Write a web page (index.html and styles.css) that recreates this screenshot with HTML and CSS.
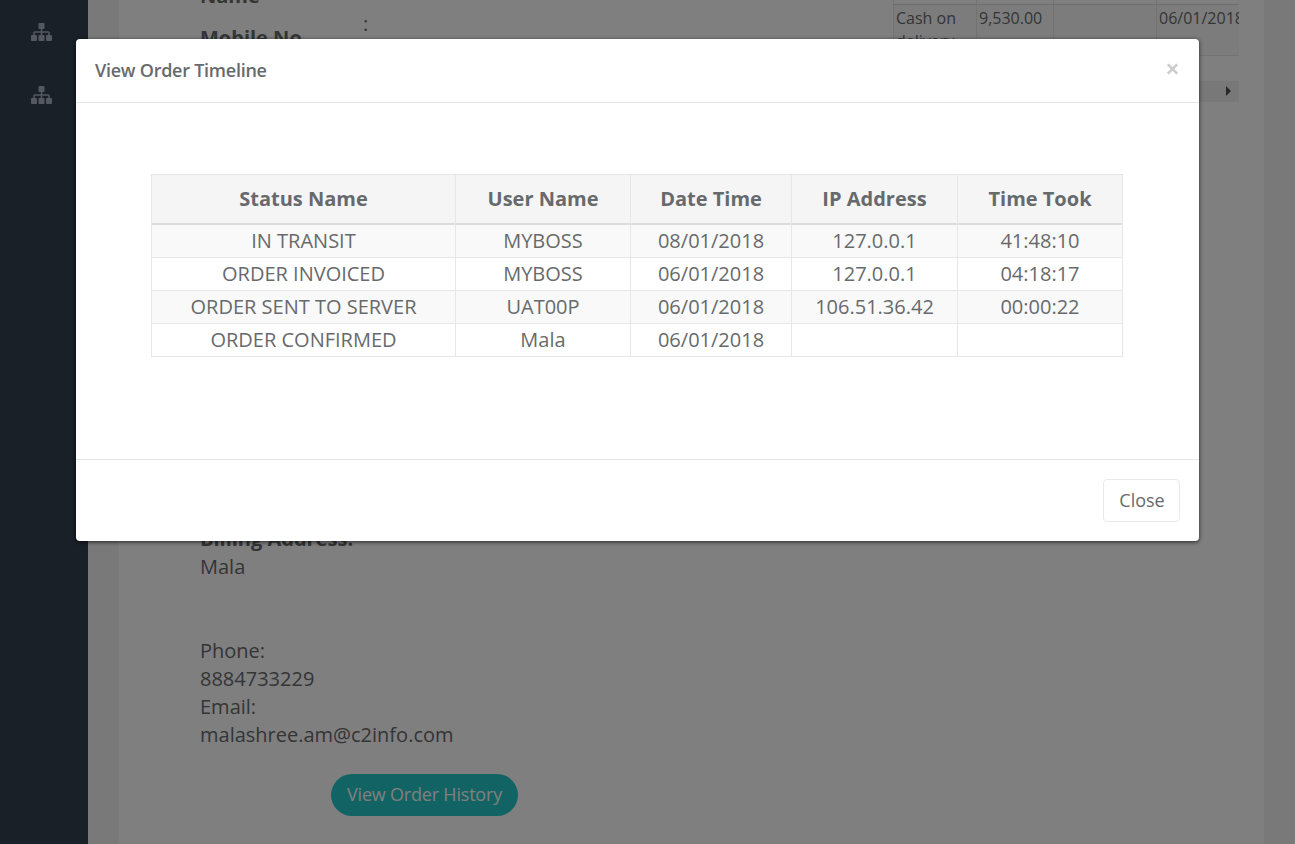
FILE: index.html
```html
<!DOCTYPE html>
<html lang="en">
<head>
<meta charset="utf-8">
<title>View Order Timeline</title>
<link rel="stylesheet" href="styles.css">
</head>
<body>
<svg class="symbols" aria-hidden="true">
  <symbol id="sitemap" viewBox="0 0 1792 1536">
    <path d="M1792 1120v320q0 40-28 68t-68 28h-320q-40 0-68-28t-28-68v-320q0-40 28-68t68-28h96V832H960v192h96q40 0 68 28t28 68v320q0 40-28 68t-68 28H736q-40 0-68-28t-28-68v-320q0-40 28-68t68-28h96V832H320v192h96q40 0 68 28t28 68v320q0 40-28 68t-68 28H96q-40 0-68-28T0 1440v-320q0-40 28-68t68-28h96V832q0-52 38-90t90-38h512V512h-96q-40 0-68-28t-28-68V96q0-40 28-68t68-28h320q40 0 68 28t28 68v320q0 40-28 68t-68 28h-96v192h512q52 0 90 38t38 90v192h96q40 0 68 28t28 68z"/>
  </symbol>
</svg>

<div class="app">
  <nav class="sidebar">
    <svg class="nav-icon"><use href="#sitemap"/></svg>
    <svg class="nav-icon"><use href="#sitemap"/></svg>
  </nav>
  <main class="main">
    <section class="content">
      <div class="order">
        <div class="details">
          <dl class="fields">
            <div class="field"><dt>Name</dt></div>
            <div class="field"><dt>Mobile No</dt><dd>:</dd></div>
          </dl>
          <address class="billing">
            <strong>Billing Address:</strong><br>
            Mala<br><br><br>
            Phone:<br>
            8884733229<br>
            Email:<br>
            malashree.am@c2info.com
          </address>
          <button class="history" type="button">View Order History</button>
        </div>
        <div class="payments">
          <div class="payments-view">
            <div class="payment-row payment-head">
              <span></span><span></span><span></span><span></span>
            </div>
            <div class="payment-row">
              <span>Cash on delivery</span>
              <span>9,530.00</span>
              <span></span>
              <span>06/01/2018</span>
            </div>
          </div>
          <div class="scrollbar"><i class="arrow"></i></div>
        </div>
      </div>
    </section>
  </main>
</div>

<div class="backdrop">
  <div class="modal" role="dialog">
    <header class="modal-header">
      <h4>View Order Timeline</h4>
      <button class="dismiss" type="button" aria-label="Dismiss">
        <svg viewBox="0 0 12 12"><path d="M1.3 1.3l9.4 9.4M10.7 1.3L1.3 10.7"/></svg>
      </button>
    </header>
    <div class="modal-body">
      <table class="timeline">
        <colgroup><col class="c-status"><col class="c-user"><col class="c-date"><col class="c-ip"><col class="c-time"></colgroup>
        <thead>
          <tr><th>Status Name</th><th>User Name</th><th>Date Time</th><th>IP Address</th><th>Time Took</th></tr>
        </thead>
        <tbody>
          <tr><td>IN TRANSIT</td><td>MYBOSS</td><td>08/01/2018</td><td>127.0.0.1</td><td>41:48:10</td></tr>
          <tr><td>ORDER INVOICED</td><td>MYBOSS</td><td>06/01/2018</td><td>127.0.0.1</td><td>04:18:17</td></tr>
          <tr><td>ORDER SENT TO SERVER</td><td>UAT00P</td><td>06/01/2018</td><td>106.51.36.42</td><td>00:00:22</td></tr>
          <tr><td>ORDER CONFIRMED</td><td>Mala</td><td>06/01/2018</td><td></td><td></td></tr>
        </tbody>
      </table>
    </div>
    <footer class="modal-footer">
      <button class="close-btn" type="button">Close</button>
    </footer>
  </div>
</div>
</body>
</html>
```
FILE: styles.css
```css
* { box-sizing: border-box; }

body {
  margin: 0;
  height: 844px;
  overflow: hidden;
  font: 20px/28px "Open Sans", "Noto Sans", sans-serif;
  color: #676a6c;
}

button { font: inherit; cursor: pointer; }

.symbols { position: absolute; width: 0; height: 0; }

/* Page behind the dialog */
.app { display: flex; height: 844px; }

.sidebar {
  display: flex;
  flex-direction: column;
  align-items: center;
  gap: 45px;
  width: 88px;
  padding: 23px 6px 0 0;
  background: #34414e;
}

.nav-icon { width: 21px; height: 18px; fill: #a7b1c2; }

.main { flex: 1; padding: 0 31px; background: #f3f3f4; }
.content { height: 844px; background: #fff; overflow: hidden; }
.order { display: flex; justify-content: space-between; padding: 0 25px 0 81px; }

.details { display: flex; flex-direction: column; margin-top: -18px; }
.fields { height: 543px; margin: 0; }
.field { display: flex; height: 42px; }
.field dt { width: 163px; font-weight: 700; }
.field dd { margin: -14px 0 0; }
.billing { font-style: normal; }

.history {
  align-self: flex-start;
  width: 187px;
  height: 42px;
  margin: 25px 0 0 131px;
  padding: 0 0 2px;
  border: 0;
  border-radius: 21px;
  background: #23c6c8;
  color: #fff;
  font-size: 18px;
  letter-spacing: -0.2px;
}

.payments { width: 346px; }
.payments-view { overflow: hidden; }

.payment-row {
  display: grid;
  grid-template-columns: 83px 77px 103px 103px;
  height: 51px;
  background: #f9f9f9;
  font-size: 16px;
  line-height: 23px;
  border-bottom: 1px solid #e7e7e7;
}

.payment-row span {
  padding: 2px;
  border-left: 1px solid #e7e7e7;
}

.payment-row.payment-head { height: 5px; background: #fff; border-bottom-color: #ddd; }

.scrollbar {
  display: flex;
  align-items: center;
  justify-content: flex-end;
  height: 21px;
  margin-top: 25px;
  padding: 0 8px 1px 0;
  background: #f1f1f1;
}

.arrow {
  border-left: 5px solid #505050;
  border-top: 5px solid transparent;
  border-bottom: 5px solid transparent;
}

/* Dialog */
.backdrop {
  position: absolute;
  inset: 0;
  padding: 39px 96px 0 76px;
  background: rgba(0, 0, 0, 0.5);
}

.modal {
  height: 502px;
  display: flex;
  flex-direction: column;
  border-radius: 4px;
  background: #fff;
  box-shadow: 0 1px 4px rgba(0, 0, 0, 0.7);
}

.modal-header {
  display: flex;
  justify-content: space-between;
  height: 64px;
  padding: 17px 20px 0 19px;
  border-bottom: 1px solid #e5e5e5;
}

.modal-header h4 { margin: 0; font-size: 18px; font-weight: 600; letter-spacing: -0.25px; }

.dismiss { height: 12px; margin-top: 6.5px; padding: 0; border: 0; background: none; }
.dismiss svg { display: block; width: 13px; height: 12px; stroke: #ccc; stroke-width: 2.6; fill: none; }

.modal-body { flex: 1; padding: 71px 76px 0 75px; }

.timeline {
  width: 972px;
  table-layout: fixed;
  border-spacing: 0;
  border-right: 1px solid #e7e7e7;
  text-align: center;
}

.c-status { width: 304px; }
.c-user { width: 175px; }
.c-date { width: 161px; }
.c-ip { width: 166px; }
.c-time { width: 165px; }

.timeline th {
  height: 51px;
  padding: 0;
  background: #f5f5f6;
  border: solid #e7e7e7;
  border-width: 1px 0 2px 1px;
  border-bottom-color: #ddd;
}

.timeline td {
  height: 33px;
  padding: 2px;
  border: solid #e7e7e7;
  border-width: 0 0 1px 1px;
}

.timeline tbody tr:nth-child(odd) { background: #f9f9f9; }

.modal-footer {
  display: flex;
  justify-content: flex-end;
  height: 82px;
  padding: 19px;
  border-top: 1px solid #e5e5e5;
}

.close-btn {
  width: 77px;
  height: 43px;
  padding: 0 0 2px 1px;
  border: 1px solid #e7eaec;
  border-radius: 4px;
  background: #fff;
  color: inherit;
  font-size: 18px;
}
```
